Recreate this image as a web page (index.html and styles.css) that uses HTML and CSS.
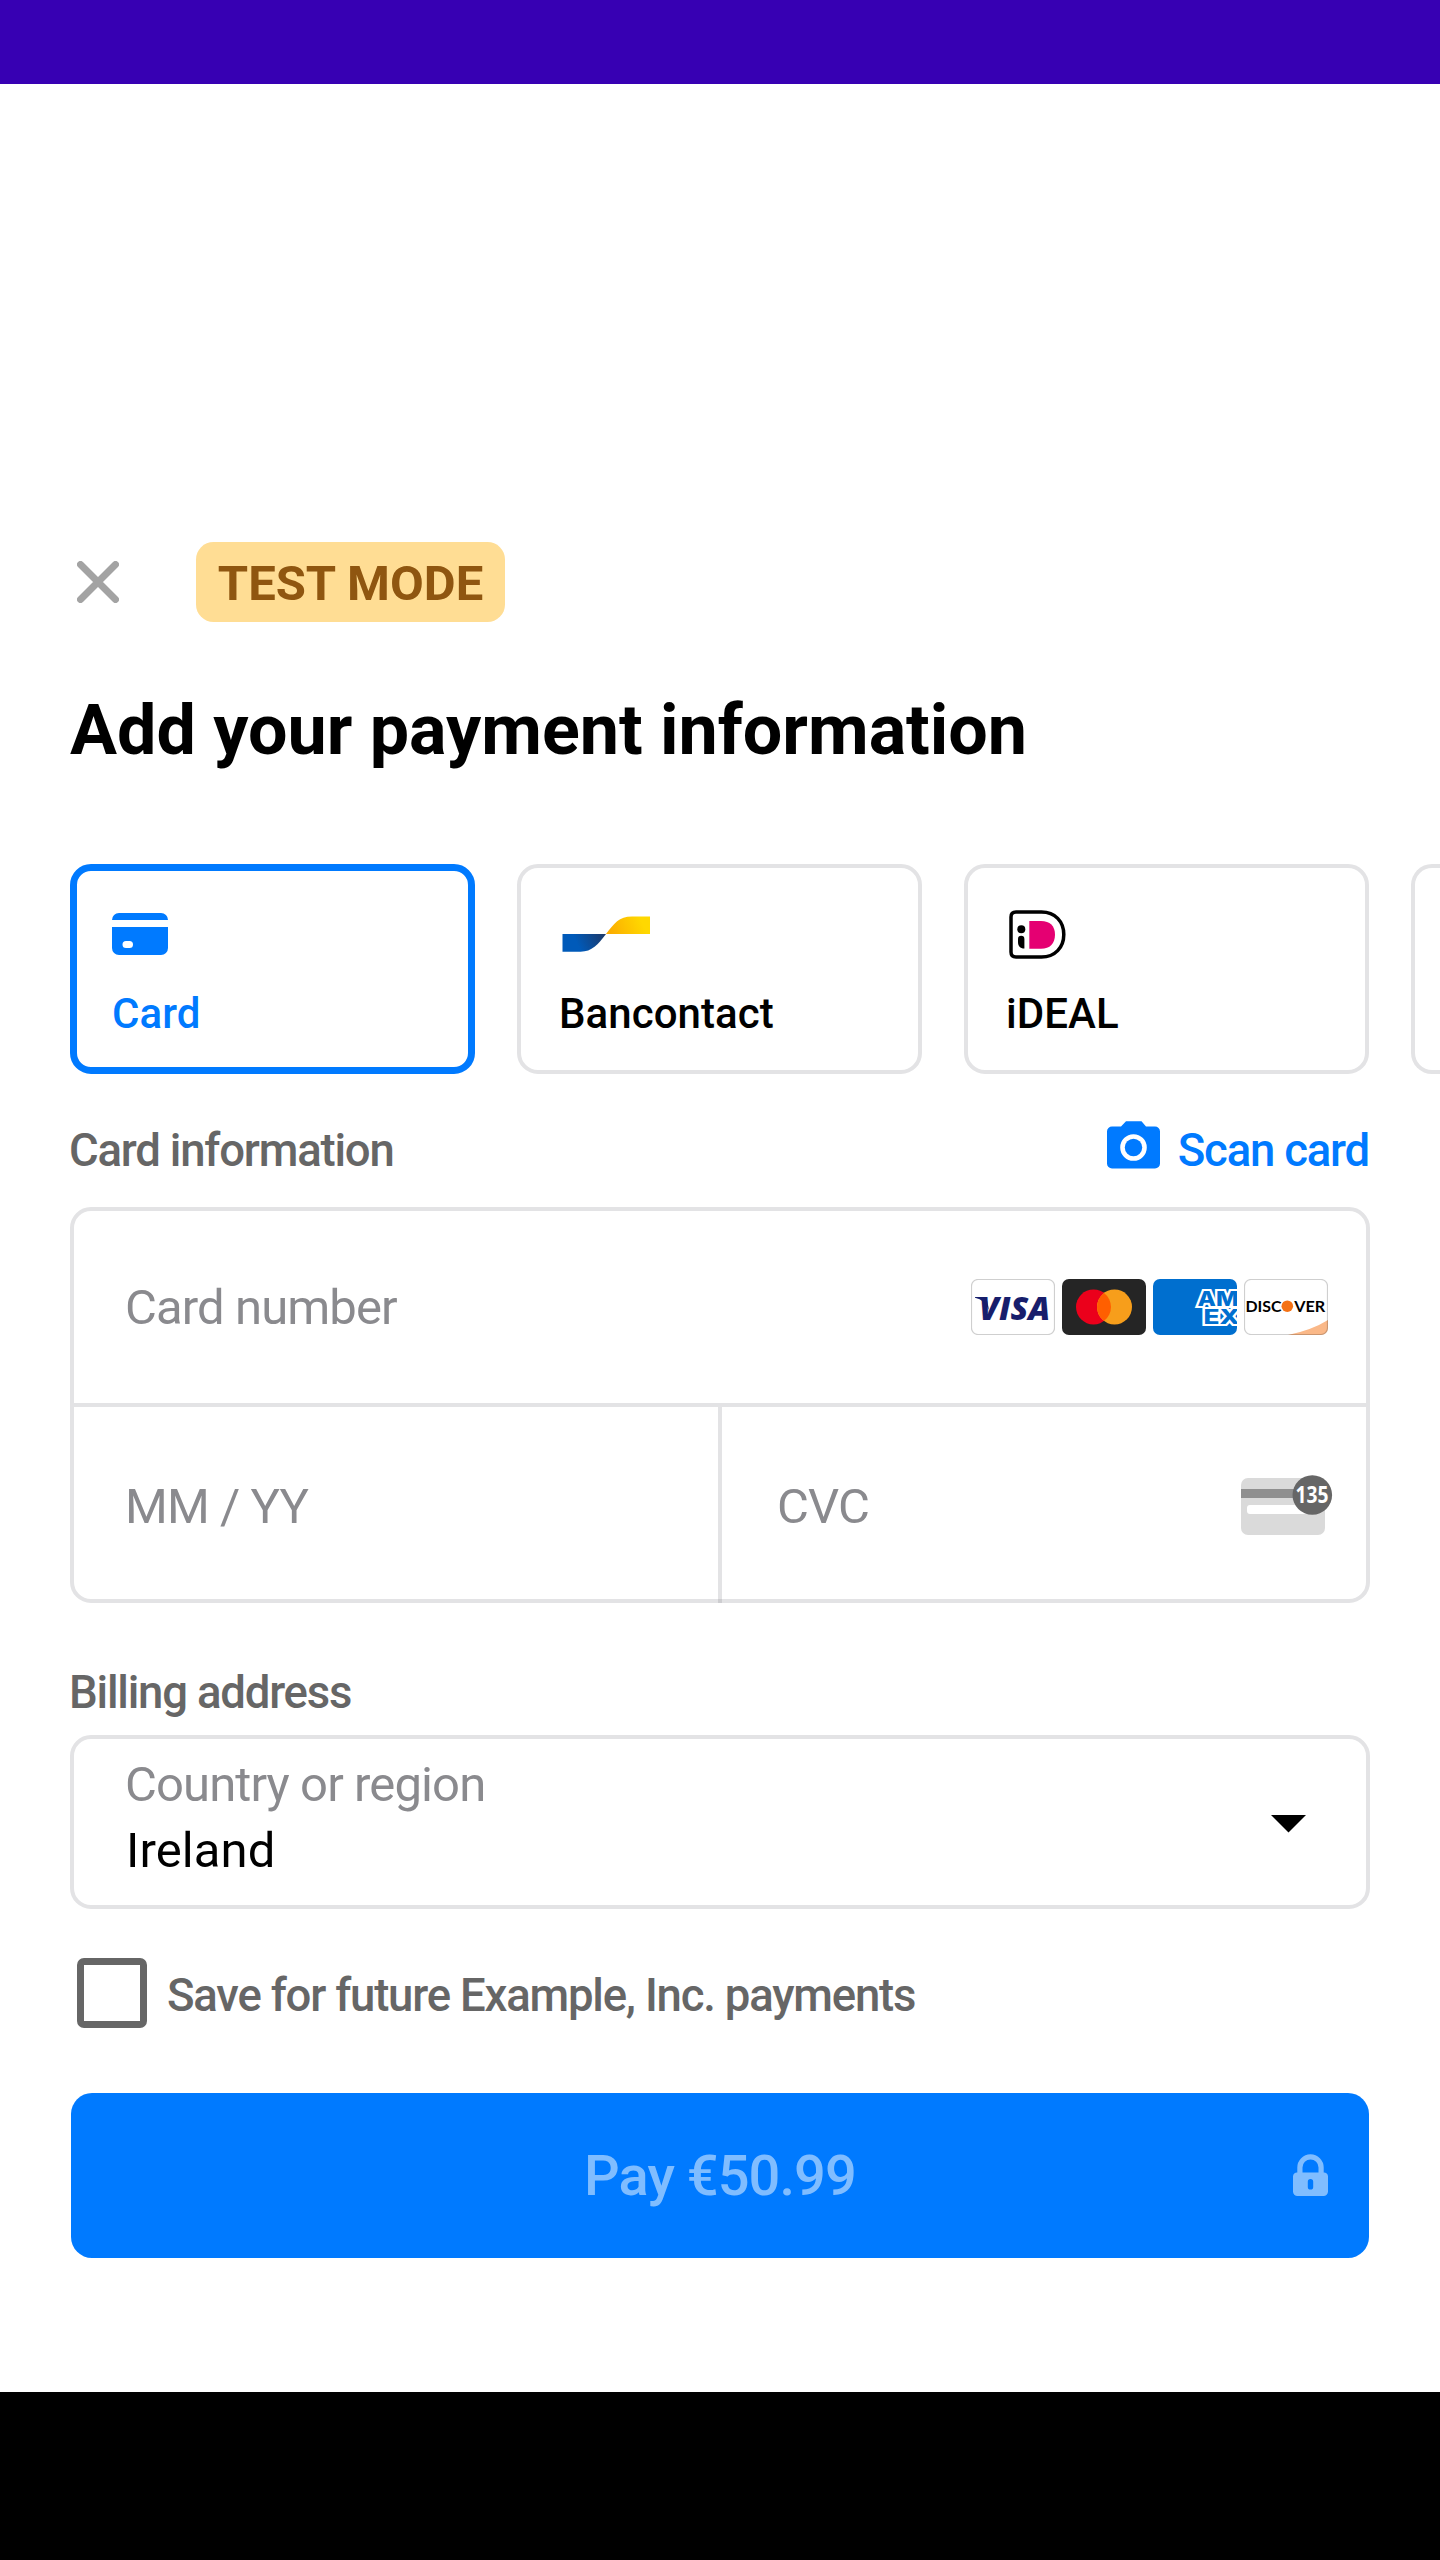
FILE: index.html
```html
<!DOCTYPE html>
<html lang="en">
<head>
<meta charset="utf-8">
<title>Add your payment information</title>
<link rel="stylesheet" href="styles.css">
</head>
<body>
<div class="status-bar"></div>
<main class="sheet">
  <header class="toolbar">
    <svg class="close" width="42" height="42" viewBox="0 0 42 42"><path d="M3.5 3.5l35 35M38.5 3.5l-35 35" stroke="#a3a3a3" stroke-width="7" stroke-linecap="round"/></svg>
    <span class="badge">TEST MODE</span>
  </header>
  <h1 class="title">Add your payment information</h1>

  <div class="tabs">
    <div class="tab tab-selected">
      <div class="tab-icon"><svg width="56" height="42" viewBox="0 0 56 42"><path fill="#007aff" fill-rule="evenodd" d="M0 7a7 7 0 0 1 7-7h42a7 7 0 0 1 7 7zM0 14h56v21a7 7 0 0 1-7 7H7a7 7 0 0 1-7-7zM14 28a3.5 3.5 0 0 0 0 7h3.5a3.5 3.5 0 0 0 0-7z"/></svg></div>
      <span class="tab-label">Card</span>
    </div>
    <div class="tab">
      <div class="tab-icon"><svg class="bancontact" width="88" height="36" viewBox="0 0 88 36">
        <defs>
          <linearGradient id="blue" x1="14" y1="25" x2="42" y2="12" gradientUnits="userSpaceOnUse"><stop stop-color="#005ab9"/><stop offset="1" stop-color="#1e3764"/></linearGradient>
          <linearGradient id="gold" x1="46" y1="20" x2="80" y2="6" gradientUnits="userSpaceOnUse"><stop stop-color="#fba900"/><stop offset="1" stop-color="#ffd800"/></linearGradient>
        </defs>
        <path fill="url(#blue)" d="M.5 18H44C36 28.500 30 35.700 18.500 35.700H.5z"/>
        <path fill="url(#gold)" d="M44 18C52 7.500 57 .4 70 .4h18V18z"/>
      </svg></div>
      <span class="tab-label">Bancontact</span>
    </div>
    <div class="tab">
      <div class="tab-icon"><svg class="ideal" width="57" height="49" viewBox="0 0 57 49">
        <path fill="#fff" stroke="#000" stroke-width="3.500" d="M7 2H32.500C46 2 54.800 11.500 54.800 24.500S46 47 32.500 47H7Q2 47 2 42V7Q2 2 7 2z"/>
        <path fill="#e50072" d="M20.300 11H32C41 11 46 16 46 24.700S41 38.800 32 38.800H20.300z"/>
        <circle cx="12.300" cy="19.300" r="4"/>
        <path d="M9 29a3.200 3.200 0 0 1 6.400 0v9.500C11 38.500 9 36 9 32z"/>
      </svg></div>
      <span class="tab-label">iDEAL</span>
    </div>
    <div class="tab tab-peek"></div>
  </div>

  <div class="section-row">
    <span class="section-label">Card information</span>
    <span class="scan">
      <svg class="camera" width="53" height="48" viewBox="0 0 53 48"><path fill="#007aff" fill-rule="evenodd" d="M5 5.500h9L19 .3h15.500l4.500 5.200h9a5 5 0 0 1 5 5v32a5 5 0 0 1-5 5H5a5 5 0 0 1-5-5v-32a5 5 0 0 1 5-5zM26.500 13.200a13.300 13.300 0 1 0 0 26.600 13.300 13.300 0 1 0 0-26.600z"/><circle cx="26.500" cy="26.500" r="8.700" fill="#007aff"/></svg>
      <span>Scan card</span>
    </span>
  </div>

  <div class="card-form">
    <div class="field field-number">
      <span class="placeholder">Card number</span>
      <div class="brands">
        <svg width="84" height="56" viewBox="0 0 84 56">
          <rect x=".5" y=".5" width="83" height="55" rx="6.500" fill="#fff" stroke="#cfcfcf" stroke-width="1.200"/>
          <text class="visa" x="8" y="41" textLength="71" lengthAdjust="spacingAndGlyphs">VISA</text>
          <path fill="#171e6c" d="M4 18h8.500q3 0 3.600 3.500L18 31Q14 21 4 18.800z"/>
        </svg>
        <svg width="84" height="56" viewBox="0 0 84 56">
          <rect width="84" height="56" rx="7" fill="#252525"/>
          <circle cx="31.500" cy="28" r="17.500" fill="#eb001b"/>
          <circle cx="52.500" cy="28" r="17.500" fill="#f79e1b"/>
          <path fill="#ff5f00" d="M42 14a17.500 17.500 0 0 1 0 28 17.500 17.500 0 0 1 0-28z"/>
        </svg>
        <svg width="84" height="56" viewBox="0 0 84 56">
          <defs><clipPath id="amex-clip"><rect width="84" height="56" rx="7"/></clipPath></defs>
          <g clip-path="url(#amex-clip)">
            <rect width="84" height="56" fill="#006fcf"/>
            <text class="amex" x="44.500" y="26.500" textLength="41" lengthAdjust="spacingAndGlyphs">AM</text>
            <text class="amex" x="50.500" y="45" textLength="36" lengthAdjust="spacingAndGlyphs">EX</text>
          </g>
        </svg>
        <svg width="84" height="56" viewBox="0 0 84 56">
          <defs><clipPath id="disc-clip"><rect width="84" height="56" rx="7"/></clipPath></defs>
          <rect width="84" height="56" rx="7" fill="#fff"/>
          <path clip-path="url(#disc-clip)" fill="#fab888" d="M44 56Q68 51 84 41v15z"/>
          <rect x=".5" y=".5" width="83" height="55" rx="6.500" fill="none" stroke="#000" stroke-opacity=".19" stroke-width="1.200"/>
          <text class="discover" x="1.500" y="32.800" textLength="36" lengthAdjust="spacingAndGlyphs">DISC</text>
          <circle cx="43.300" cy="27.200" r="5.800" fill="#f47216"/>
          <text class="discover" x="50.200" y="32.800" textLength="31" lengthAdjust="spacingAndGlyphs">VER</text>
        </svg>
      </div>
    </div>
    <div class="field-pair">
      <div class="field field-expiry"><span class="placeholder">MM / YY</span></div>
      <div class="field field-cvc">
        <span class="placeholder">CVC</span>
        <svg class="cvc-icon" width="92" height="62" viewBox="0 0 92 62">
          <rect x="0" y="3" width="84" height="57" rx="7" fill="#dadada"/>
          <rect x="0" y="14" width="84" height="9" fill="#8f8f8f"/>
          <rect x="6" y="30" width="60" height="9" rx="3" fill="#fff"/>
          <circle cx="71.300" cy="20" r="19.800" fill="#666"/>
          <text class="cvc-digits" x="54.500" y="28" textLength="33" lengthAdjust="spacingAndGlyphs">135</text>
        </svg>
      </div>
    </div>
    <div class="divider-foot"></div>
  </div>

  <div class="billing-label section-label">Billing address</div>
  <div class="select">
    <div class="select-text">
      <span class="placeholder">Country or region</span>
      <span class="select-value">Ireland</span>
    </div>
    <svg class="arrow" width="35" height="18" viewBox="0 0 35 18"><path d="M0 0h35L17.500 17.500z"/></svg>
  </div>

  <div class="save">
    <span class="checkbox"></span>
    <span class="save-label">Save for future Example, Inc. payments</span>
  </div>

  <div class="pay">
    <span class="pay-label">Pay €50.99</span>
    <svg class="lock" width="35" height="42" viewBox="0 0 35 42"><path fill="#80bdff" fill-rule="evenodd" d="M4.300 18.500V13.500a13.200 13.200 0 0 1 26.400 0v5A4 4 0 0 1 35 22.500v15a4.500 4.500 0 0 1-4.500 4.500h-26A4.500 4.500 0 0 1 0 37.500v-15a4 4 0 0 1 4.300-4zM9.500 18.500h16v-5a8 8 0 0 0-16 0zM17.500 25a2.700 2.700 0 0 0-2.700 2.700v5.200a2.700 2.700 0 0 0 5.400 0v-5.200a2.700 2.700 0 0 0-2.700-2.700z"/></svg>
  </div>
</main>
<div class="nav-bar"></div>
</body>
</html>
```
FILE: styles.css
```css
* { box-sizing: border-box; }

body {
  margin: 0;
  width: 1440px;
  height: 2560px;
  display: flex;
  flex-direction: column;
  overflow: hidden;
  background: #fff;
  color: #000;
  font-family: Roboto, sans-serif;
}

svg { display: block; flex: none; }

.status-bar { height: 84px; flex: none; background: #3700b3; }
.nav-bar { height: 168px; flex: none; background: #000; }

.sheet {
  flex: 1;
  min-height: 0;
  padding: 458px 70px 0;
}

.toolbar { display: flex; align-items: center; height: 80px; padding-left: 7px; }

.badge {
  margin-left: 77px;
  width: 309px;
  height: 80px;
  border-radius: 17.500px;
  background: #ffdd94;
  color: #8f5610;
  font-size: 49px;
  font-weight: 700;
  line-height: 83px;
  text-align: center;
  white-space: nowrap;
}

.title {
  margin: 67px 0 0;
  font-size: 70px;
  font-weight: 700;
  line-height: 82px;
  white-space: nowrap;
}

/* The row bleeds to the right edge of the screen */
.tabs { display: flex; gap: 42px; margin: 93px -70px 0 0; overflow: hidden; }

.tab {
  flex: none;
  width: 405px;
  height: 210px;
  border: 4px solid #e3e3e5;
  border-radius: 21px;
  padding: 38px 38px 0;
}

.tab-selected { border: 7px solid #007aff; padding: 35px 35px 0; color: #007aff; }
.tab-peek { width: 29px; border-right: 0; border-radius: 21px 0 0 21px; padding: 0; }
.tab-icon { display: flex; align-items: center; height: 56px; }
.bancontact, .ideal { margin-left: 3px; }
.tab-label { display: block; margin-top: 27px; font-size: 42px; font-weight: 500; line-height: 50px; letter-spacing: 0.050px; }

.section-row {
  display: flex;
  justify-content: space-between;
  margin-top: 49px;
  height: 55px;
  line-height: 55px;
}

.section-label, .scan, .save-label { font-size: 45.500px; font-weight: 500; letter-spacing: -1.200px; white-space: nowrap; }
.section-label, .save-label { color: #666; }
.section-label { margin-left: -1px; }
.scan { display: flex; gap: 18px; margin-right: 1px; color: #007aff; }
.camera { margin-top: -2px; }

.card-form {
  margin-top: 29px;
  height: 396px;
  border: 4px solid #e3e3e5;
  border-radius: 21px;
}

.field { display: flex; align-items: center; justify-content: space-between; height: 192px; }
.field-number { height: 196px; padding: 0 38px 0 51px; border-bottom: 4px solid #e3e3e5; }
.field-pair { display: flex; }
.field-expiry { width: 648px; padding: 7px 0 0 51px; border-right: 4px solid #e3e3e5; }
.field-cvc { flex: 1; padding: 7px 33px 0 55px; }
.divider-foot { width: 4px; height: 4px; margin-left: 644px; background: #cdcdd0; }
.placeholder { padding-top: 1px; color: #8a8a8e; font-size: 49px; line-height: 66px; letter-spacing: -0.900px; }
.brands { display: flex; gap: 7px; }
.cvc-icon { margin-bottom: 2px; }

.visa { font: italic 800 32px "Open Sans", sans-serif; fill: #171e6c; }
.amex { font: 800 20px Inter, sans-serif; fill: #006fcf; stroke: #fff; stroke-width: 4px; paint-order: stroke; }
.discover { font: 700 16px Lato, sans-serif; fill: #000; }
.cvc-digits { font: 700 24px "Noto Sans", sans-serif; fill: #fff; }

.billing-label { margin-top: 62px; line-height: 55px; }

.select {
  display: flex;
  align-items: center;
  justify-content: space-between;
  margin-top: 15px;
  height: 174px;
  border: 4px solid #e3e3e5;
  border-radius: 21px;
  padding: 0 60px 0 51px;
}

.select-text { display: flex; flex-direction: column; align-self: flex-start; padding-top: 12px; }
.select-value { padding-left: 1px; font-size: 49px; line-height: 66px; letter-spacing: 0.100px; }
.arrow { margin-top: 4px; }

.save { display: flex; align-items: center; gap: 20px; margin-top: 49px; padding-left: 7px; }
.checkbox { width: 70px; height: 70px; border: 7px solid #666; border-radius: 7px; }
.save-label { line-height: 55px; padding-top: 4px; }

.pay {
  display: grid;
  grid-template-columns: 1fr auto 1fr;
  align-items: center;
  margin: 64.500px 1px 0;
  height: 165px;
  border-radius: 21px;
  padding: 0 41px;
  background: #007aff;
}

.pay-label { grid-column: 2; padding-top: 2px; color: #80bdff; font-size: 56px; font-weight: 500; letter-spacing: -0.950px; white-space: nowrap; }
.lock { justify-self: end; }
```
